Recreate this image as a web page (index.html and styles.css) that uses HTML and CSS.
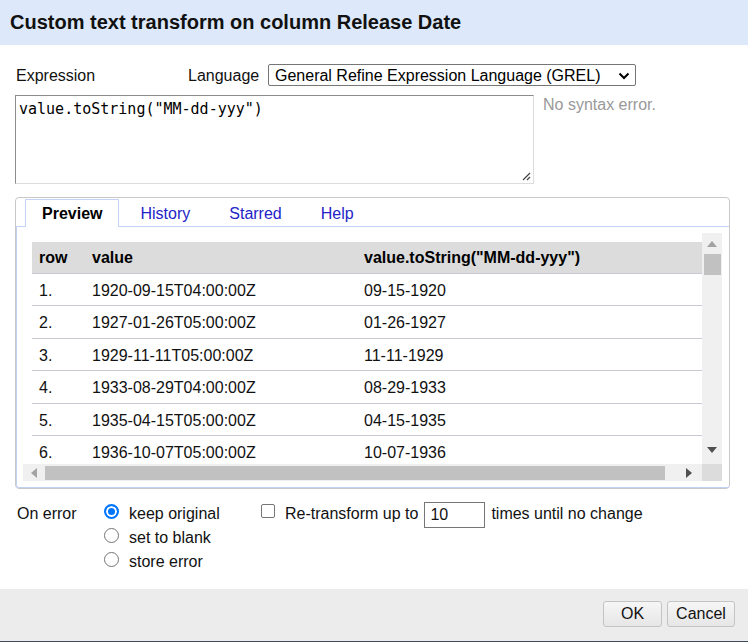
FILE: index.html
```html
<!DOCTYPE html>
<html>
<head>
<meta charset="utf-8">
<link rel="stylesheet" href="styles.css">
</head>
<body>
<div class="dialog">
  <div class="header">Custom text transform on column Release Date</div>
  <div class="content">
    <div class="lang-row">
      <div class="expr-label">Expression</div>
      <div class="lang-label">Language</div>
      <div class="select">
        <span>General Refine Expression Language (GREL)</span>
        <svg class="chev" width="12" height="8" viewBox="0 0 12 8"><path d="M1.5 1.5 L6 6 L10.5 1.5" fill="none" stroke="#000" stroke-width="2"/></svg>
      </div>
    </div>
    <div class="expr-row">
      <div class="textarea">value.toString("MM-dd-yyy")
        <svg class="grip" width="10" height="10" viewBox="0 0 10 10"><path d="M9 2 L2 9 M9 6 L6 9" stroke="#444" stroke-width="1.2" fill="none"/></svg>
      </div>
      <div class="status">No syntax error.</div>
    </div>
    <div class="tabs">
      <div class="tabbar">
        <div class="tab active">Preview</div>
        <div class="tab">History</div>
        <div class="tab">Starred</div>
        <div class="tab">Help</div>
      </div>
      <div class="panel">
        <div class="scroller">
          <div class="viewport">
            <table class="grid">
              <thead>
                <tr><th class="c1">row</th><th class="c2">value</th><th class="c3">value.toString("MM-dd-yyy")</th></tr>
              </thead>
              <tbody>
                <tr><td>1.</td><td>1920-09-15T04:00:00Z</td><td>09-15-1920</td></tr>
                <tr><td>2.</td><td>1927-01-26T05:00:00Z</td><td>01-26-1927</td></tr>
                <tr><td>3.</td><td>1929-11-11T05:00:00Z</td><td>11-11-1929</td></tr>
                <tr><td>4.</td><td>1933-08-29T04:00:00Z</td><td>08-29-1933</td></tr>
                <tr><td>5.</td><td>1935-04-15T05:00:00Z</td><td>04-15-1935</td></tr>
                <tr><td>6.</td><td>1936-10-07T05:00:00Z</td><td>10-07-1936</td></tr>
              </tbody>
            </table>
          </div>
          <div class="vbar">
            <svg class="arrow-up" width="10" height="6" viewBox="0 0 10 6"><path d="M0 6 L5 0 L10 6 Z" fill="#a3a3a3"/></svg>
            <div class="vthumb"></div>
            <div class="vspace"></div>
            <svg class="arrow-down" width="10" height="6" viewBox="0 0 10 6"><path d="M0 0 L10 0 L5 6 Z" fill="#505050"/></svg>
          </div>
          <div class="hbar">
            <svg class="arrow-left" width="6" height="10" viewBox="0 0 6 10"><path d="M6 0 L6 10 L0 5 Z" fill="#a3a3a3"/></svg>
            <div class="hthumb"></div>
            <svg class="arrow-right" width="6" height="10" viewBox="0 0 6 10"><path d="M0 0 L6 5 L0 10 Z" fill="#505050"/></svg>
          </div>
          <div class="corner"></div>
        </div>
      </div>
    </div>
    <div class="options">
      <div class="onerror">On error</div>
      <div class="radios">
        <div class="radio-line"><span class="radio checked"></span>keep original</div>
        <div class="radio-line"><span class="radio"></span>set to blank</div>
        <div class="radio-line"><span class="radio"></span>store error</div>
      </div>
      <div class="repeat">
        <span class="checkbox"></span>Re-transform up to <span class="num">10</span> times until no change
      </div>
    </div>
  </div>
  <div class="footer">
    <div class="btn ok">OK</div>
    <div class="btn cancel">Cancel</div>
  </div>
</div>
</body>
</html>
```

FILE: styles.css
```css
* { box-sizing: border-box; }
html, body { margin: 0; padding: 0; background: #fff; }
body {
  font-family: "Liberation Sans", Arial, sans-serif;
  font-size: 16px;
  color: #111;
}
.dialog { width: 748px; height: 642px; display: flex; flex-direction: column; }
.header {
  height: 45px;
  background: #dde9fa;
  display: flex;
  align-items: center;
  padding-left: 10px;
  font-weight: bold;
  font-size: 20px;
  color: #111;
}
.content { height: 544px; padding: 19px 0 0 15px; }
.lang-row { display: flex; align-items: center; height: 22px; }
.expr-label { width: 173px; padding-left: 1px; padding-top: 2px; }
.lang-label { width: 80px; padding-top: 2px; }
.select {
  width: 368px; height: 22px;
  border: 1px solid #767676;
  border-radius: 2px;
  display: flex; align-items: center; justify-content: space-between;
  padding: 1px 5px 0 6px;
  color: #000;
}
.chev { margin-top: 1px; }
.expr-row { display: flex; margin-top: 9px; }
.textarea {
  position: relative;
  width: 519px; height: 89px;
  border: 1px solid;
  border-color: #8c8c8c #dcdcdc #dcdcdc #8c8c8c;
  font-family: "DejaVu Sans Mono", "Liberation Mono", monospace;
  font-size: 15px;
  padding: 3px 3px;
  line-height: 20px;
  color: #000;
  white-space: pre;
}
.grip { position: absolute; right: 2px; bottom: 2px; }
.status { margin-left: 9px; color: #999; font-size: 16px; padding-top: 1px; }
.tabs {
  margin-top: 13px;
  width: 715px; height: 292px;
  border: 1px solid #c8c8c8;
  border-radius: 4px;
  padding-top: 1px;
  display: flex; flex-direction: column;
}
.tabbar { display: flex; height: 28px; padding-left: 9px; gap: 3px; position: relative; z-index: 1; }
.tab {
  padding: 0 17px 0 17px;
  line-height: 27px;
  height: 28px;
  color: #2323c8;
  border: 1px solid transparent;
  border-bottom: none;
}
.tab.active {
  color: #000;
  font-weight: bold;
  background: #fff;
  border-color: #c3d2f5;
  padding: 0 16px 0 16px;
}
.panel {
  margin-top: -1px;
  flex: 1;
  border: 1px solid #c3d2f5;
  border-right: none;
  border-radius: 0 0 0 3px;
  padding: 6px 6px 6px 6px;
}
.scroller {
  width: 699px; height: 248px;
  display: grid;
  grid-template-columns: 679px 20px;
  grid-template-rows: 231px 17px;
}
.viewport { overflow: hidden; padding: 9px 0 0 9px; }
.grid { border-collapse: collapse; width: 720px; font-size: 16px; }
.grid th {
  background: #dcdcdc;
  text-align: left;
  font-weight: bold;
  height: 31px;
  padding: 2px 7px 0;
  border-bottom: 1px solid #c9c9d3;
  color: #000;
}
.grid td {
  height: 32.5px;
  padding: 3px 7px 0;
  border-bottom: 1px solid #c9c9d3;
  color: #111;
}
.c1 { width: 53px; }
.c2 { width: 272px; }
.vbar {
  background: #f0f0f0;
  display: flex; flex-direction: column; align-items: center;
}
.arrow-up { margin-top: 8px; }
.vthumb { width: 17px; height: 21px; background: #c1c1c1; margin-top: 7px; margin-left: 1px; }
.vspace { flex: 1; }
.arrow-down { margin-bottom: 11px; }
.hbar {
  background: #f0f0f0;
  display: flex; align-items: center;
}
.arrow-left { margin-left: 8px; }
.hthumb { width: 620px; height: 14px; background: #c1c1c1; margin-left: 8px; }
.arrow-right { margin-left: 21px; }
.corner { background: #dcdcdc; }
.options {
  display: flex;
  margin-top: 13px;
  font-size: 16px;
  line-height: 24px;
  color: #111;
}
.onerror { width: 89px; padding-left: 2px; }
.radios { width: 157px; }
.radio-line { display: flex; align-items: center; }
.radio {
  width: 15px; height: 15px;
  border: 1px solid #767676;
  border-radius: 50%;
  margin: 0 10px 0 0;
  position: relative; top: -3px;
  background: #fff;
}
.radio.checked {
  border: 2px solid #0075ff;
  background: #0075ff;
  box-shadow: inset 0 0 0 2px #fff;
}
.repeat { display: flex; align-items: center; height: 24px; }
.checkbox {
  width: 14px; height: 14px;
  border: 1px solid #767676;
  border-radius: 2px;
  margin-right: 10px;
  position: relative; top: -3px;
}
.num {
  display: inline-block;
  width: 61px; height: 26px;
  border: 1px solid #767676;
  margin: 0 6px 0 6px;
  padding-left: 5px;
  line-height: 24px;
  position: relative; top: 1px;
}
.footer {
  height: 53px;
  background: #ececec;
  border-bottom: 1px solid #3e4a57;
  display: flex; justify-content: flex-end; align-items: flex-start;
  padding: 12px 13px 0 0;
  gap: 5px;
}
.btn {
  height: 26px;
  border: 1px solid #c4c4c4;
  border-radius: 3px;
  background: linear-gradient(#f6f6f6, #e6e6e6);
  display: flex; align-items: center; justify-content: center;
  color: #111;
}
.ok { width: 59px; }
.cancel { width: 68px; }
```
